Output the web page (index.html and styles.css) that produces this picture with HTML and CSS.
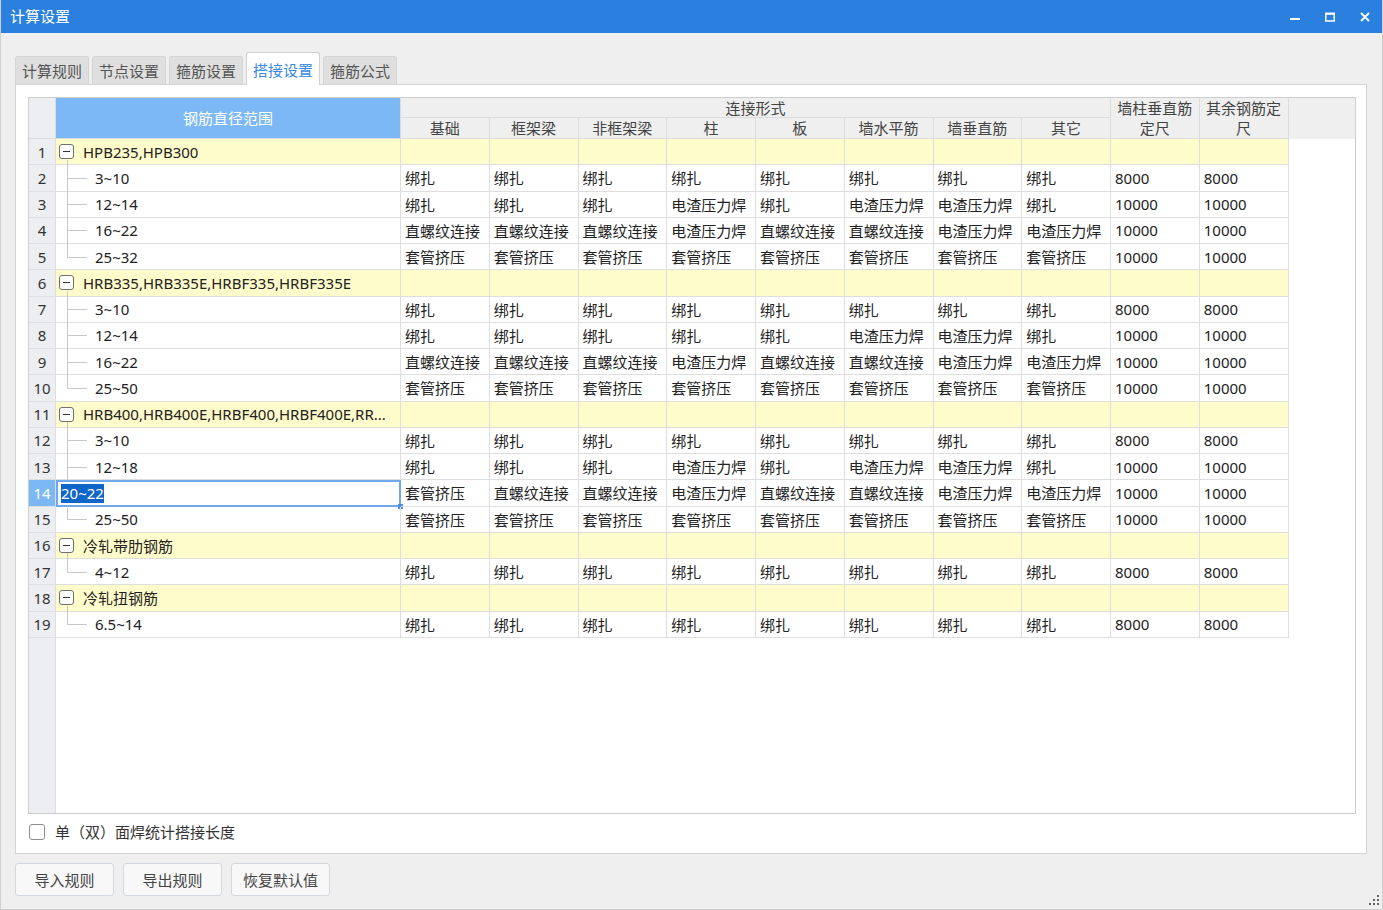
FILE: index.html
```html
<!DOCTYPE html>
<html lang="zh-CN">
<head>
<meta charset="utf-8">
<title>计算设置</title>
<link rel="stylesheet" href="styles.css">
</head>
<body>
<div class="window">
  <div class="titlebar">
    <span class="title">计算设置</span>
    <div class="winctl">
      <svg viewBox="0 0 10 10"><rect x="0" y="6" width="10" height="2" fill="#fff"/></svg>
      <svg viewBox="0 0 10 10"><rect x="0.75" y="1.5" width="8.5" height="7.5" fill="none" stroke="#fff" stroke-width="1.5"/><rect x="0" y="0.75" width="10" height="2" fill="#fff"/></svg>
      <svg viewBox="0 0 10 10"><path d="M1 1 L9 9 M9 1 L1 9" stroke="#fff" stroke-width="1.8" fill="none"/></svg>
    </div>
  </div>
  <div class="main">
    <div class="tabs">
      <div class="tab">计算规则</div>
      <div class="tab">节点设置</div>
      <div class="tab">箍筋设置</div>
      <div class="tab active">搭接设置</div>
      <div class="tab">箍筋公式</div>
    </div>
    <div class="panel">
      <div class="grid">
        <div class="ghead">
          <div class="hc rnh"></div>
          <div class="hc key">钢筋直径范围</div>
          <div class="hc grp">连接形式</div>
          <div class="hc d1">墙柱垂直筋定尺</div>
          <div class="hc d2">其余钢筋定尺</div>
          <div class="hc fill"></div>
          <div class="hc s">基础</div>
          <div class="hc s">框架梁</div>
          <div class="hc s">非框架梁</div>
          <div class="hc s">柱</div>
          <div class="hc s">板</div>
          <div class="hc s">墙水平筋</div>
          <div class="hc s">墙垂直筋</div>
          <div class="hc s">其它</div>
        </div>

        <div class="row grp"><div class="rn">1</div><div class="c gname"><span class="box"></span>HPB235,HPB300</div><div class="c"></div><div class="c"></div><div class="c"></div><div class="c"></div><div class="c"></div><div class="c"></div><div class="c"></div><div class="c"></div><div class="c"></div><div class="c"></div><div class="f"></div></div>
        <div class="row"><div class="rn">2</div><div class="c tree">3~10</div><div class="c">绑扎</div><div class="c">绑扎</div><div class="c">绑扎</div><div class="c">绑扎</div><div class="c">绑扎</div><div class="c">绑扎</div><div class="c">绑扎</div><div class="c">绑扎</div><div class="c">8000</div><div class="c">8000</div><div class="f"></div></div>
        <div class="row"><div class="rn">3</div><div class="c tree">12~14</div><div class="c">绑扎</div><div class="c">绑扎</div><div class="c">绑扎</div><div class="c">电渣压力焊</div><div class="c">绑扎</div><div class="c">电渣压力焊</div><div class="c">电渣压力焊</div><div class="c">绑扎</div><div class="c">10000</div><div class="c">10000</div><div class="f"></div></div>
        <div class="row"><div class="rn">4</div><div class="c tree">16~22</div><div class="c">直螺纹连接</div><div class="c">直螺纹连接</div><div class="c">直螺纹连接</div><div class="c">电渣压力焊</div><div class="c">直螺纹连接</div><div class="c">直螺纹连接</div><div class="c">电渣压力焊</div><div class="c">电渣压力焊</div><div class="c">10000</div><div class="c">10000</div><div class="f"></div></div>
        <div class="row"><div class="rn">5</div><div class="c tree last">25~32</div><div class="c">套管挤压</div><div class="c">套管挤压</div><div class="c">套管挤压</div><div class="c">套管挤压</div><div class="c">套管挤压</div><div class="c">套管挤压</div><div class="c">套管挤压</div><div class="c">套管挤压</div><div class="c">10000</div><div class="c">10000</div><div class="f"></div></div>

        <div class="row grp"><div class="rn">6</div><div class="c gname"><span class="box"></span>HRB335,HRB335E,HRBF335,HRBF335E</div><div class="c"></div><div class="c"></div><div class="c"></div><div class="c"></div><div class="c"></div><div class="c"></div><div class="c"></div><div class="c"></div><div class="c"></div><div class="c"></div><div class="f"></div></div>
        <div class="row"><div class="rn">7</div><div class="c tree">3~10</div><div class="c">绑扎</div><div class="c">绑扎</div><div class="c">绑扎</div><div class="c">绑扎</div><div class="c">绑扎</div><div class="c">绑扎</div><div class="c">绑扎</div><div class="c">绑扎</div><div class="c">8000</div><div class="c">8000</div><div class="f"></div></div>
        <div class="row"><div class="rn">8</div><div class="c tree">12~14</div><div class="c">绑扎</div><div class="c">绑扎</div><div class="c">绑扎</div><div class="c">绑扎</div><div class="c">绑扎</div><div class="c">电渣压力焊</div><div class="c">电渣压力焊</div><div class="c">绑扎</div><div class="c">10000</div><div class="c">10000</div><div class="f"></div></div>
        <div class="row"><div class="rn">9</div><div class="c tree">16~22</div><div class="c">直螺纹连接</div><div class="c">直螺纹连接</div><div class="c">直螺纹连接</div><div class="c">电渣压力焊</div><div class="c">直螺纹连接</div><div class="c">直螺纹连接</div><div class="c">电渣压力焊</div><div class="c">电渣压力焊</div><div class="c">10000</div><div class="c">10000</div><div class="f"></div></div>
        <div class="row"><div class="rn">10</div><div class="c tree last">25~50</div><div class="c">套管挤压</div><div class="c">套管挤压</div><div class="c">套管挤压</div><div class="c">套管挤压</div><div class="c">套管挤压</div><div class="c">套管挤压</div><div class="c">套管挤压</div><div class="c">套管挤压</div><div class="c">10000</div><div class="c">10000</div><div class="f"></div></div>

        <div class="row grp"><div class="rn">11</div><div class="c gname"><span class="box"></span>HRB400,HRB400E,HRBF400,HRBF400E,RR...</div><div class="c"></div><div class="c"></div><div class="c"></div><div class="c"></div><div class="c"></div><div class="c"></div><div class="c"></div><div class="c"></div><div class="c"></div><div class="c"></div><div class="f"></div></div>
        <div class="row"><div class="rn">12</div><div class="c tree">3~10</div><div class="c">绑扎</div><div class="c">绑扎</div><div class="c">绑扎</div><div class="c">绑扎</div><div class="c">绑扎</div><div class="c">绑扎</div><div class="c">绑扎</div><div class="c">绑扎</div><div class="c">8000</div><div class="c">8000</div><div class="f"></div></div>
        <div class="row"><div class="rn">13</div><div class="c tree">12~18</div><div class="c">绑扎</div><div class="c">绑扎</div><div class="c">绑扎</div><div class="c">电渣压力焊</div><div class="c">绑扎</div><div class="c">电渣压力焊</div><div class="c">电渣压力焊</div><div class="c">绑扎</div><div class="c">10000</div><div class="c">10000</div><div class="f"></div></div>
        <div class="row sel"><div class="rn">14</div><div class="c edit"><span class="hl">20~22</span><span class="handle"></span></div><div class="c">套管挤压</div><div class="c">直螺纹连接</div><div class="c">直螺纹连接</div><div class="c">电渣压力焊</div><div class="c">直螺纹连接</div><div class="c">直螺纹连接</div><div class="c">电渣压力焊</div><div class="c">电渣压力焊</div><div class="c">10000</div><div class="c">10000</div><div class="f"></div></div>
        <div class="row"><div class="rn">15</div><div class="c tree last">25~50</div><div class="c">套管挤压</div><div class="c">套管挤压</div><div class="c">套管挤压</div><div class="c">套管挤压</div><div class="c">套管挤压</div><div class="c">套管挤压</div><div class="c">套管挤压</div><div class="c">套管挤压</div><div class="c">10000</div><div class="c">10000</div><div class="f"></div></div>

        <div class="row grp"><div class="rn">16</div><div class="c gname"><span class="box"></span>冷轧带肋钢筋</div><div class="c"></div><div class="c"></div><div class="c"></div><div class="c"></div><div class="c"></div><div class="c"></div><div class="c"></div><div class="c"></div><div class="c"></div><div class="c"></div><div class="f"></div></div>
        <div class="row"><div class="rn">17</div><div class="c tree last">4~12</div><div class="c">绑扎</div><div class="c">绑扎</div><div class="c">绑扎</div><div class="c">绑扎</div><div class="c">绑扎</div><div class="c">绑扎</div><div class="c">绑扎</div><div class="c">绑扎</div><div class="c">8000</div><div class="c">8000</div><div class="f"></div></div>

        <div class="row grp"><div class="rn">18</div><div class="c gname"><span class="box"></span>冷轧扭钢筋</div><div class="c"></div><div class="c"></div><div class="c"></div><div class="c"></div><div class="c"></div><div class="c"></div><div class="c"></div><div class="c"></div><div class="c"></div><div class="c"></div><div class="f"></div></div>
        <div class="row"><div class="rn">19</div><div class="c tree last">6.5~14</div><div class="c">绑扎</div><div class="c">绑扎</div><div class="c">绑扎</div><div class="c">绑扎</div><div class="c">绑扎</div><div class="c">绑扎</div><div class="c">绑扎</div><div class="c">绑扎</div><div class="c">8000</div><div class="c">8000</div><div class="f"></div></div>

        <div class="gfill"><div class="rn"></div></div>
      </div>
      <div class="opt"><span class="chk"></span><span>单（双）面焊统计搭接长度</span></div>
    </div>
    <div class="btns">
      <div class="btn">导入规则</div>
      <div class="btn">导出规则</div>
      <div class="btn">恢复默认值</div>
    </div>
  </div>
  <svg class="grip" viewBox="0 0 12 12" width="12" height="12">
    <rect x="9" y="0" width="2" height="2" fill="#666"/>
    <rect x="5" y="4" width="2" height="2" fill="#666"/><rect x="9" y="4" width="2" height="2" fill="#666"/>
    <rect x="1" y="8" width="2" height="2" fill="#666"/><rect x="5" y="8" width="2" height="2" fill="#666"/><rect x="9" y="8" width="2" height="2" fill="#666"/>
  </svg>
</div>
</body>
</html>
```
FILE: styles.css
```css
* { box-sizing: border-box; }
html, body { margin: 0; padding: 0; }
body {
  background: #efefef;
  font-family: "Noto Sans", "Noto Sans CJK SC", sans-serif;
  font-size: 15px;
  color: #333;
}
.window {
  position: relative;
  width: 1383px;
  height: 910px;
  display: flex;
  flex-direction: column;
  border: 1px solid #cfcfcf;
  border-top: 0;
  background: #efefef;
  overflow: hidden;
}
.titlebar {
  height: 33px;
  flex: none;
  background: #2b7fde;
  color: #fff;
  display: flex;
  align-items: center;
  padding: 0 12px 0 9px;
}
.title { font-size: 15px; line-height: 1; }
.winctl { margin-left: auto; display: flex; gap: 25px; align-items: center; }
.winctl svg { display: block; width: 10px; height: 10px; }

.main { flex: 1; padding: 19px 14px 0 14px; display: flex; flex-direction: column; }
.tabs { display: flex; align-items: flex-end; gap: 3px; height: 32px; flex: none; }
.tab {
  width: 74px;
  height: 28px;
  display: flex;
  align-items: center;
  justify-content: center;
  background: #dfdfdf;
  border: 1px solid #d4d4d4;
  border-bottom: 0;
  border-radius: 3px 3px 0 0;
  color: #555;
}
.tab.active {
  height: 33px;
  margin-bottom: -1px;
  background: #fff;
  color: #3a89e4;
  position: relative;
  z-index: 1;
  border-color: #d0d0d0;
}
.panel {
  width: 1352px;
  height: 770px;
  flex: none;
  background: #fff;
  border: 1px solid #d3d3d3;
  padding: 12px 10px 0 12px;
  display: flex;
  flex-direction: column;
}

.grid {
  width: 1328px;
  height: 717px;
  flex: none;
  border: 1px solid #cdcdcd;
  display: flex;
  flex-direction: column;
  background: #fff;
}
.ghead, .row, .gfill {
  display: grid;
  grid-template-columns: 27px 345px repeat(10, 88.75px) 1fr;
}
.ghead { grid-template-rows: 20px 21px; background: #efefef; color: #444; flex: none; }
.hc {
  border-right: 1px solid #dcdcdc;
  border-bottom: 1px solid #dcdcdc;
  display: flex;
  align-items: center;
  justify-content: center;
  text-align: center;
  line-height: 20px;
}
.hc.rnh { grid-column: 1; grid-row: 1 / 3; background: #eceef2; }
.hc.key { grid-column: 2; grid-row: 1 / 3; background: #7cb8f6; color: #fff; }
.hc.grp { grid-column: 3 / 11; grid-row: 1; }
.hc.d1 { grid-column: 11; grid-row: 1 / 3; padding: 0 2px; }
.hc.d2 { grid-column: 12; grid-row: 1 / 3; padding: 0 2px; }
.hc.fill { grid-column: 13; grid-row: 1 / 3; border: 0; }
.hc.s { grid-row: 2; }

.row { height: 26.25px; flex: none; }
.row > div {
  border-right: 1px solid #dedede;
  border-bottom: 1px solid #dedede;
  display: flex;
  align-items: center;
  white-space: nowrap;
}
.rn { justify-content: center; background: #eceef2; color: #333; }
.c { padding-left: 4px; position: relative; color: #222; }
.row > .f { border: 0; }
.grp .c { background: #fffccc; }

.tree { padding-left: 39px; }
.tree::before {
  content: "";
  position: absolute;
  left: 11px;
  top: -1px;
  bottom: -1px;
  border-left: 1px solid #c8c8c8;
}
.tree.last::before { bottom: 50%; }
.tree::after {
  content: "";
  position: absolute;
  left: 11px;
  width: 20px;
  top: 50%;
  border-top: 1px solid #c8c8c8;
}
.gname { padding-left: 3px; }
.gname::after {
  content: "";
  position: absolute;
  left: 11px;
  top: calc(50% + 8px);
  bottom: -1px;
  border-left: 1px solid #c8c8c8;
}
.box {
  width: 15px;
  height: 15px;
  border: 1px solid #707070;
  border-radius: 3px;
  background: #fff;
  margin-right: 9px;
  position: relative;
  flex: none;
}
.box::after {
  content: "";
  position: absolute;
  left: 3px;
  right: 3px;
  top: 6px;
  height: 1px;
  background: #333;
}

.row.sel .rn { background: #7cb8f6; color: #fff; }
.row > .edit { border: 2px solid #6ea8ee; padding-left: 3px; }
.hl { background: #1065c9; color: #fff; line-height: 19px; }
.handle {
  position: absolute;
  right: -4px;
  bottom: -4px;
  width: 5px;
  height: 5px;
  background: #4a8fe3;
}

.gfill { flex: 1; }
.gfill .rn { border-right: 1px solid #dedede; }

.opt { display: flex; align-items: center; margin-top: 9px; height: 17px; padding-left: 1px; color: #333; }
.chk {
  width: 16px;
  height: 16px;
  border: 1px solid #8c8c8c;
  border-radius: 3px;
  background: #fff;
  margin-right: 10px;
}

.btns { display: flex; gap: 9px; margin-top: 9px; }
.btn {
  width: 99px;
  height: 33px;
  border: 1px solid #d3d7de;
  border-radius: 3px;
  background: #f8f8f8;
  display: flex;
  align-items: center;
  justify-content: center;
  color: #444;
}
.grip { position: absolute; right: 2px; bottom: 2px; }
```
